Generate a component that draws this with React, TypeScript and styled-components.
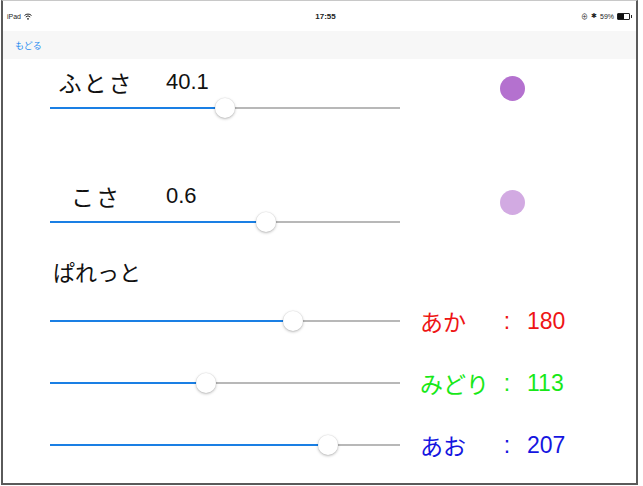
import styled, { createGlobalStyle } from "styled-components";

const GlobalStyle = createGlobalStyle`
  html, body {
    margin: 0;
    padding: 0;
    background: #ffffff;
  }
  body {
    font-family: "Liberation Sans", "Noto Sans CJK JP", sans-serif;
  }
`;

const Frame = styled.div`
  box-sizing: border-box;
  width: 637px;
  height: 485px;
  margin-left: 1px;
  border: 2px solid #5a5a5a;
  border-top: 1px solid #c8c8c8;
  display: flex;
  flex-direction: column;
  overflow: hidden;
  background: #fff;
`;

const StatusBar = styled.div`
  height: 30px;
  padding: 0 6px 0 4px;
  display: flex;
  align-items: center;
  justify-content: space-between;
  font-size: 7px;
  color: #222;
`;

const StatusSide = styled.div`
  width: 120px;
  display: flex;
  align-items: center;
  gap: 3px;
  justify-content: ${(p: { $end?: boolean }) => (p.$end ? "flex-end" : "flex-start")};
`;

const Clock = styled.div`
  font-size: 8px;
  font-weight: bold;
  margin-left: 14px;
`;

const Battery = styled.div`
  width: 11px;
  height: 5px;
  border: 1px solid #222;
  border-radius: 1px;
  position: relative;
  display: flex;
  &::before {
    content: "";
    width: 59%;
    background: #111;
  }
  &::after {
    content: "";
    position: absolute;
    right: -3px;
    top: 1px;
    width: 1px;
    height: 3px;
    background: #222;
  }
`;

const NavBar = styled.div`
  height: 28px;
  background: #f7f7f7;
  display: flex;
  align-items: center;
  padding-left: 12px;
  font-family: "Noto Sans CJK JP", sans-serif;
  font-size: 9px;
  color: #2a8cf0;
`;

const Content = styled.div`
  padding: 9px 0 0 47px;
  display: flex;
  flex-direction: column;
`;

const SettingRow = styled.div<{ $top: number }>`
  display: flex;
  margin-top: ${(p) => p.$top}px;
`;

const LeftCol = styled.div`
  width: 350px;
  display: flex;
  flex-direction: column;
`;

const LabelLine = styled.div`
  height: 30px;
  padding-bottom: 2px;
  box-sizing: border-box;
  display: flex;
  align-items: center;
  font-size: 22px;
  color: #111;
`;

const Name = styled.span`
  width: 92px;
  text-align: center;
  font-family: "Noto Sans CJK JP", sans-serif;
  font-size: 23px;
  letter-spacing: 2px;
`;

const Value = styled.span`
  margin-left: 24px;
`;

const RightCol = styled.div<{ $pad: number }>`
  padding: ${(p) => p.$pad}px 0 0 100px;
`;

const Dot = styled.div`
  width: 25px;
  height: 25px;
  border-radius: 50%;
`;

const Title = styled.div`
  margin-top: 25px;
  height: 28px;
  display: flex;
  align-items: center;
  padding-left: 3px;
  font-family: "Noto Sans CJK JP", sans-serif;
  font-size: 22px;
  color: #111;
`;

const ColorRow = styled.div<{ $top: number }>`
  display: flex;
  align-items: center;
  height: 40px;
  margin-top: ${(p) => p.$top}px;
`;

const ColorText = styled.div<{ $color: string }>`
  margin-left: 20px;
  display: flex;
  align-items: center;
  font-size: 23px;
  color: ${(p) => p.$color};
`;

const ColorName = styled.span`
  width: 77px;
  font-family: "Noto Sans CJK JP", sans-serif;
`;

const Colon = styled.span`
  width: 20px;
  text-align: center;
`;

const ColorValue = styled.span`
  margin-left: 10px;
`;

const SliderBox = styled.div`
  position: relative;
  width: 350px;
  height: 20px;
  flex-shrink: 0;
`;

const Track = styled.div`
  position: absolute;
  left: 0;
  right: 0;
  top: 9px;
  height: 2px;
  background: #b8b8b8;
`;

const Fill = styled.div`
  position: absolute;
  left: 0;
  top: 9px;
  height: 2px;
  background: #1a7fe4;
`;

const Thumb = styled.div`
  position: absolute;
  top: 0;
  width: 20px;
  height: 20px;
  margin-left: -10px;
  border-radius: 50%;
  background: #fff;
  box-shadow: 0 1px 3px rgba(0, 0, 0, 0.28), 0 0 0 0.5px rgba(0, 0, 0, 0.06);
`;

function Slider({ value }: { value: number }) {
  const x = 10 + value * 330;
  return (
    <SliderBox>
      <Track />
      <Fill style={{ width: x }} />
      <Thumb style={{ left: x }} />
    </SliderBox>
  );
}

const Wifi = () => (
  <svg width="8" height="7" viewBox="0 0 8 7">
    <path d="M0.5 2.5 A5 5 0 0 1 7.5 2.5" stroke="#222" strokeWidth="1" fill="none" />
    <path d="M1.8 4 A3 3 0 0 1 6.2 4" stroke="#222" strokeWidth="1" fill="none" />
    <circle cx="4" cy="5.8" r="0.9" fill="#222" />
  </svg>
);

const palette = [
  { name: "あか", value: 180, color: "#ee1515", top: 16 },
  { name: "みどり", value: 113, color: "#18e818", top: 22 },
  { name: "あお", value: 207, color: "#1515e0", top: 22 },
];

export default function App() {
  const [r, g, b] = palette.map((p) => p.value);
  return (
    <>
      <GlobalStyle />
      <Frame>
        <StatusBar>
          <StatusSide>
            <span>iPad</span>
            <Wifi />
          </StatusSide>
          <Clock>17:55</Clock>
          <StatusSide $end>
            <span>⊕</span>
            <span>✱</span>
            <span>59%</span>
            <Battery />
          </StatusSide>
        </StatusBar>
        <NavBar>もどる</NavBar>
        <Content>
          <SettingRow $top={0}>
            <LeftCol>
              <LabelLine>
                <Name>ふとさ</Name>
                <Value>40.1</Value>
              </LabelLine>
              <Slider value={0.5} />
            </LeftCol>
            <RightCol $pad={8}>
              <Dot style={{ background: `rgb(${r},${g},${b})` }} />
            </RightCol>
          </SettingRow>
          <SettingRow $top={64}>
            <LeftCol>
              <LabelLine>
                <Name>こさ</Name>
                <Value>0.6</Value>
              </LabelLine>
              <Slider value={0.625} />
            </LeftCol>
            <RightCol $pad={8}>
              <Dot style={{ background: `rgba(${r},${g},${b},0.6)` }} />
            </RightCol>
          </SettingRow>
          <Title>ぱれっと</Title>
          {palette.map((p) => (
            <ColorRow key={p.name} $top={p.top}>
              <Slider value={p.value / 255} />
              <ColorText $color={p.color}>
                <ColorName>{p.name}</ColorName>
                <Colon>:</Colon>
                <ColorValue>{p.value}</ColorValue>
              </ColorText>
            </ColorRow>
          ))}
        </Content>
      </Frame>
    </>
  );
}
